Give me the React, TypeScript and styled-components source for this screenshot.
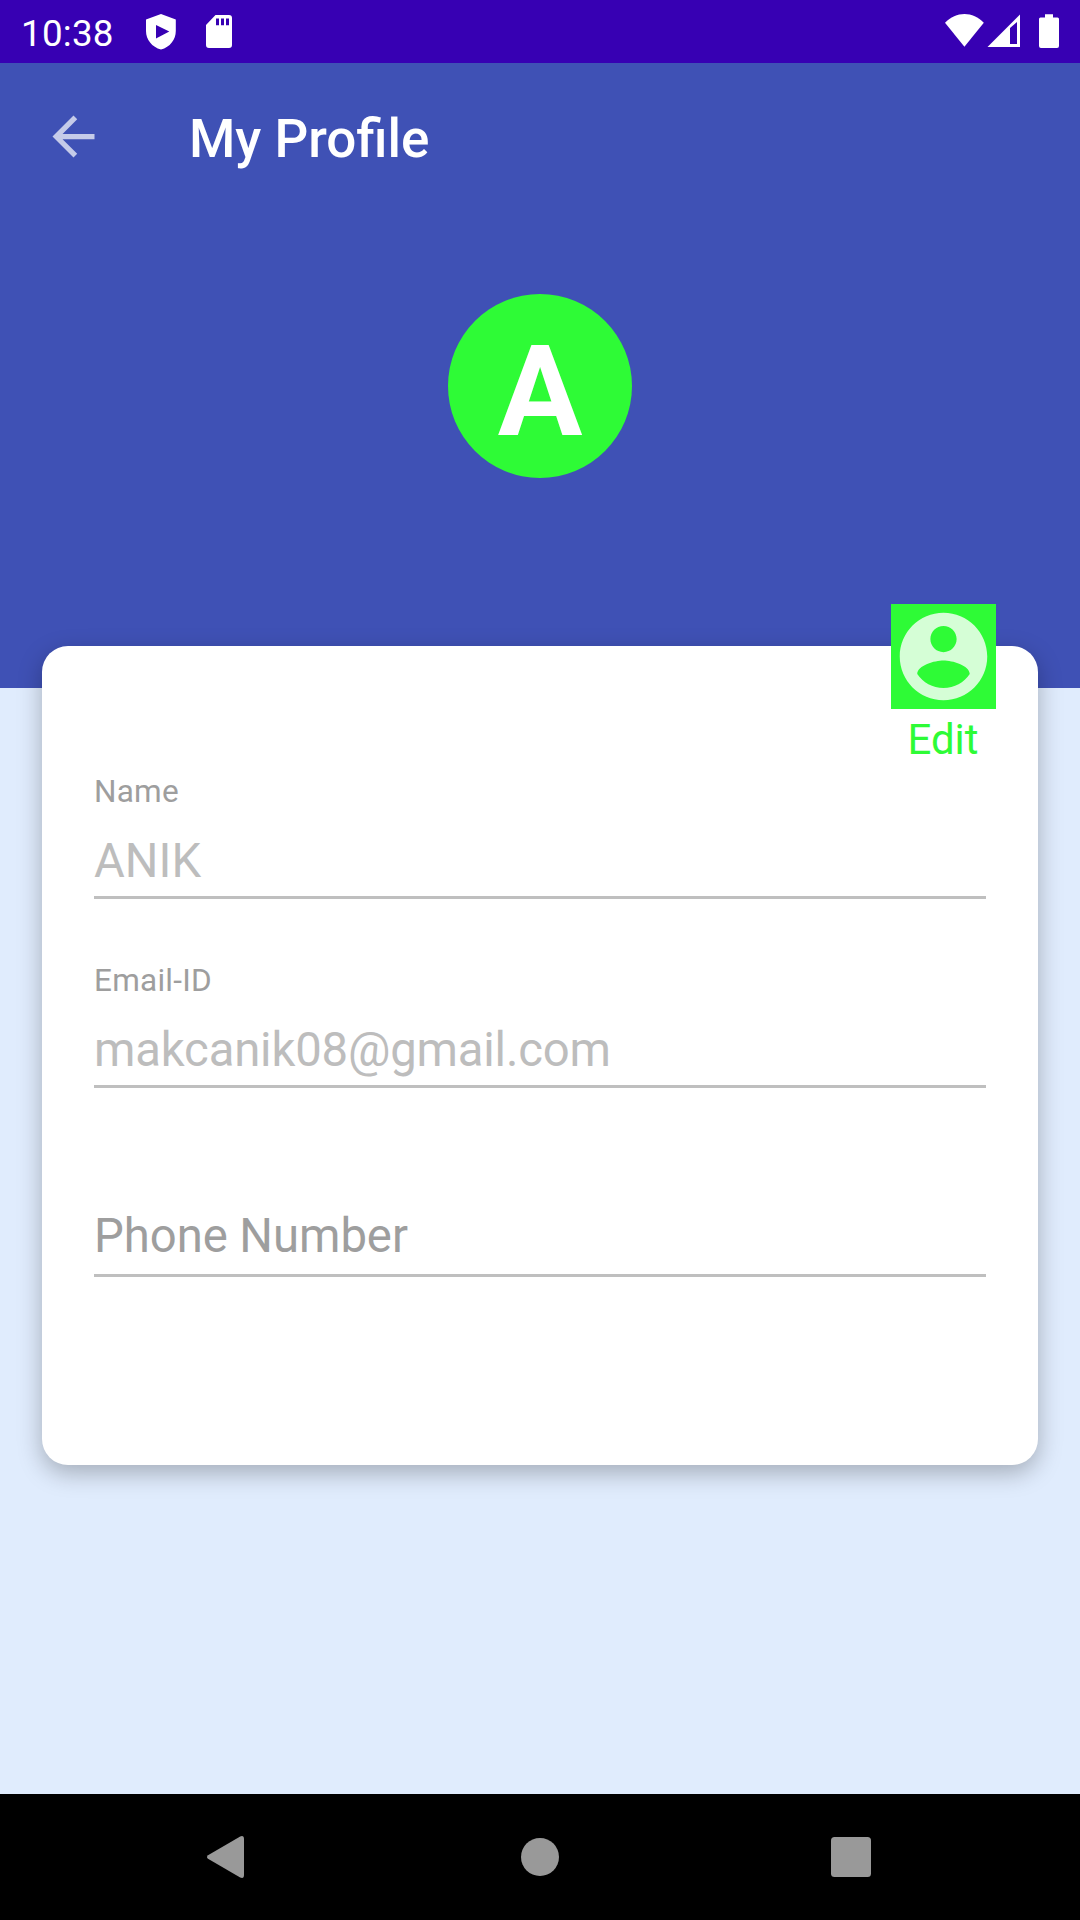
import React from "react";
import styled, { createGlobalStyle } from "styled-components";

const GlobalStyle = createGlobalStyle`
  *, *::before, *::after { box-sizing: border-box; }
  body { margin: 0; background: #e0ecfd; font-family: Roboto, "Liberation Sans", sans-serif; }
  svg { display: block; flex: none; }
`;

const Screen = styled.div`
  display: flex;
  flex-direction: column;
  width: 1080px;
  height: 1920px;
  overflow: hidden;
  background: #e0ecfd;
`;

const StatusBar = styled.div`
  display: flex;
  align-items: flex-start;
  height: 63px;
  flex: none;
  padding: 0 21px;
  background: #3700b3;
  color: #fff;
`;

const Clock = styled.span`
  width: 124px;
  padding-top: 12px;
  font-size: 36.75px;
  line-height: 43px;
  letter-spacing: 0.25px;
`;

const StatusGroup = styled.div<{ $end?: boolean }>`
  display: flex;
  gap: 27px;
  padding-top: 14px;
  margin-left: ${(p) => (p.$end ? "auto" : "0")};
`;

const Header = styled.header`
  display: flex;
  flex-direction: column;
  align-items: center;
  height: 625px;
  flex: none;
  background: #3f51b5;
`;

const Toolbar = styled.div`
  display: flex;
  align-items: center;
  width: 100%;
  height: 147px;
`;

const BackButton = styled.button`
  display: flex;
  align-items: center;
  justify-content: center;
  width: 147px;
  height: 147px;
  padding: 0;
  border: 0;
  background: none;
`;

const Title = styled.h1`
  margin: 0 0 0 42px;
  padding-top: 4px;
  font-size: 53px;
  line-height: 62px;
  font-weight: 500;
  color: #fff;
`;

const Avatar = styled.div`
  display: flex;
  justify-content: center;
  width: 184px;
  height: 184px;
  margin-top: 84px;
  padding-top: 24px;
  border-radius: 50%;
  background: #2efb36;
  color: #fff;
  font-size: 126px;
  line-height: 148px;
  font-weight: 700;
`;

const Card = styled.main`
  display: flex;
  flex-direction: column;
  height: 819px;
  flex: none;
  margin: -42px 42px 0;
  padding: 0 52px;
  border-radius: 26px;
  background: #fff;
  box-shadow: 0 8px 24px rgba(0, 0, 0, 0.27);
`;

const EditButton = styled.button`
  display: flex;
  flex-direction: column;
  align-items: center;
  align-self: flex-end;
  width: 105px;
  height: 159px;
  margin: -42px -10px 0 0;
  padding: 0;
  border: 0;
  background: none;
  font-family: inherit;
  font-size: 42px;
  line-height: 48px;
  color: #2efb36;
`;

const EditIcon = styled.span`
  display: flex;
  justify-content: center;
  align-items: center;
  width: 105px;
  height: 105px;
  margin-bottom: 7px;
  background: #2efb36;
`;

const EditLabel = styled.span`
  padding-right: 1px;
`;

const Fields = styled.div`
  display: flex;
  flex-direction: column;
`;

const Field = styled.div`
  display: flex;
  flex-direction: column;
  justify-content: flex-end;
  height: 189px;
  flex: none;
  padding-bottom: 53px;
`;

const Label = styled.label`
  margin-bottom: 3px;
  font-size: 31.5px;
  line-height: 36px;
  letter-spacing: 0.25px;
  color: #9e9e9e;
`;

const Value = styled.div<{ $hint?: boolean; $tracking?: number }>`
  height: 86px;
  padding-top: ${(p) => (p.$hint ? "17px" : "20px")};
  border-bottom: 3px solid #bfbfbf;
  font-size: 47.25px;
  line-height: 56px;
  letter-spacing: ${(p) => p.$tracking ?? 0}px;
  color: ${(p) => (p.$hint ? "#9e9e9e" : "#bdbdbd")};
`;

const NavBar = styled.nav`
  display: grid;
  grid-template-columns: 38px 40px 40px;
  justify-content: space-between;
  align-items: center;
  height: 126px;
  flex: none;
  margin-top: auto;
  padding: 0 209px 0 206px;
  background: #000;
`;

const HomeIcon = styled.svg`
  margin-left: 3px;
`;

export default function App() {
  return (
    <>
      <GlobalStyle />
      <Screen>
        <StatusBar>
          <Clock>10:38</Clock>
          <StatusGroup>
            <svg width="32" height="36" viewBox="0 0 32 36">
              <path fill="#fff" fillRule="evenodd" d="M16 0 30.8 5.4V17C30.8 25.8 25 33 16 35.6 7 33 1 25.8 1 17V5.4ZM11 11V24.4L24.3 17.5Z" />
            </svg>
            <svg width="28" height="36" viewBox="0 0 28 36">
              <path fill="#fff" fillRule="evenodd" d="M11.5 1H25Q28 1 28 4V31Q28 34 25 34H5Q2 34 2 31V11ZM12 4.5V11.3H15V4.5ZM17 4.5V11.3H20V4.5ZM22 4.5V11.3H25V4.5Z" />
            </svg>
          </StatusGroup>
          <StatusGroup $end>
            <svg width="114" height="36" viewBox="0 0 114 36">
              <path fill="#fff" d="M0 8.8C11-2.8 28-2.8 38.8 8.8L19.4 32.7Z" />
              <path fill="#fff" fillRule="evenodd" d="M42.5 33 75 .5V33ZM65 14V30H72V8Z" />
              <path fill="#fff" d="M100 .2H108V3.5H112.5Q114 3.5 114 5V32Q114 34 112 34H96Q94 34 94 32V5Q94 3.5 95.5 3.5H100Z" />
            </svg>
          </StatusGroup>
        </StatusBar>
        <Header>
          <Toolbar>
            <BackButton aria-label="Back">
              <svg width="63" height="63" viewBox="0 0 24 24">
                <path fill="#fff" fillOpacity="0.7" d="M20 11H7.83l5.59-5.59L12 4l-8 8 8 8 1.41-1.41L7.83 13H20v-2z" />
              </svg>
            </BackButton>
            <Title>My Profile</Title>
          </Toolbar>
          <Avatar>A</Avatar>
        </Header>
        <Card>
          <EditButton>
            <EditIcon>
              <svg width="105" height="105" viewBox="0 0 24 24">
                <path fill="#fff" fillOpacity="0.8" d="M12 2C6.48 2 2 6.48 2 12s4.48 10 10 10 10-4.48 10-10S17.52 2 12 2zm0 3c1.66 0 3 1.34 3 3s-1.34 3-3 3-3-1.34-3-3 1.34-3 3-3zm0 14.2c-2.5 0-4.71-1.28-6-3.22.03-1.99 4-3.08 6-3.08 1.99 0 5.97 1.09 6 3.08-1.29 1.94-3.5 3.22-6 3.22z" />
              </svg>
            </EditIcon>
            <EditLabel>Edit</EditLabel>
          </EditButton>
          <Fields>
            <Field>
              <Label>Name</Label>
              <Value>ANIK</Value>
            </Field>
            <Field>
              <Label>Email-ID</Label>
              <Value $tracking={-0.18}>makcanik08@gmail.com</Value>
            </Field>
            <Field>
              <Value $hint $tracking={-0.05}>Phone Number</Value>
            </Field>
          </Fields>
        </Card>
        <NavBar>
          <svg width="38" height="42" viewBox="0 0 38 42">
            <path fill="#999" d="M34.2.4Q38-1 38 3V39Q38 43 34.2 41.5L2 22.8Q0 21 2 19.2Z" />
          </svg>
          <HomeIcon width="38" height="38" viewBox="0 0 38 38">
            <circle cx="19" cy="19" r="19" fill="#999" />
          </HomeIcon>
          <svg width="40" height="40" viewBox="0 0 40 40">
            <rect width="40" height="40" rx="3.5" fill="#999" />
          </svg>
        </NavBar>
      </Screen>
    </>
  );
}
